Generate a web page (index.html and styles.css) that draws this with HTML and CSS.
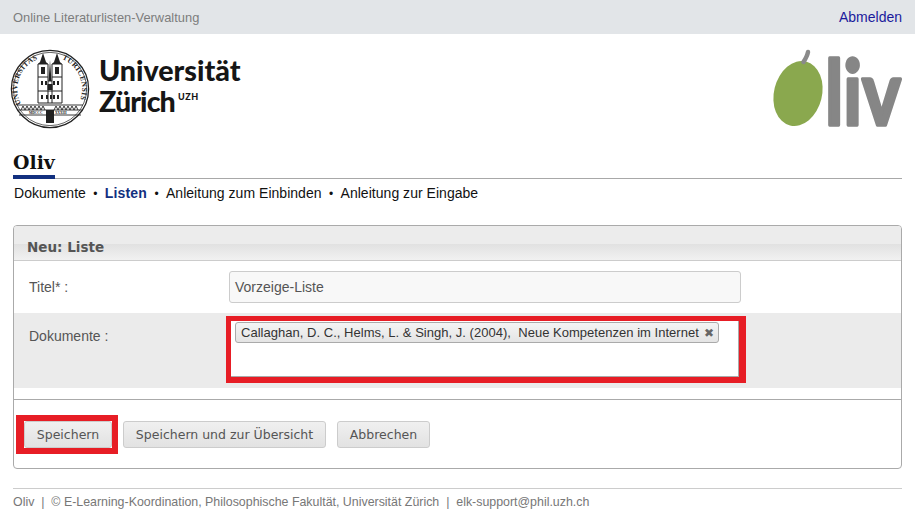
FILE: index.html
```html
<!DOCTYPE html>
<html lang="de">
<head>
<meta charset="utf-8">
<title>Oliv</title>
<link rel="stylesheet" href="styles.css">
</head>
<body>
<div class="topbar">
  <span class="topbar-title">Online Literaturlisten-Verwaltung</span>
  <a class="logout" href="#">Abmelden</a>
</div>
<header class="brand">
  <div class="uzh">
    <svg class="seal" width="80" height="80" viewBox="0 0 80 80">
      <defs>
        <path id="arcL" d="M11 55 A32 32 0 0 1 28 10"/>
        <path id="arcR" d="M52 10 A32 32 0 0 1 70 51"/>
      </defs>
      <circle cx="40" cy="40" r="38.600" fill="#fff" stroke="#222" stroke-width="1.300"/>
      <circle cx="40" cy="40" r="36.600" fill="none" stroke="#222" stroke-width=".7"/>
      <text class="seal-text"><textPath href="#arcL">UNIVERSITAS</textPath></text>
      <text class="seal-text"><textPath href="#arcR">TURICENSIS</textPath></text>
      <g fill="none" stroke="#222" stroke-width="1">
        <path d="M28 54V15h10v39M42 54V15h10v39M38 32h4M28 28h10M42 28h10M28 42h24M28 54h24"/>
      </g>
      <g fill="#222">
        <path d="M28 15l2-2 3-9 3 9 2 2zM42 15l2-2 3-9 3 9 2 2zM38.500 32l1.500-21 1.500 21z"/>
        <rect x="31" y="18" width="4" height="7"/>
        <rect x="45" y="18" width="4" height="7"/>
        <rect x="37.500" y="35" width="5" height="6"/>
        <rect x="31" y="32" width="2" height="4"/><rect x="35" y="32" width="2" height="4"/>
        <rect x="43" y="32" width="2" height="4"/><rect x="47" y="32" width="2" height="4"/>
        <rect x="31" y="46" width="2" height="4"/><rect x="36" y="46" width="2" height="4"/>
        <rect x="40" y="46" width="2" height="4"/><rect x="43" y="46" width="2" height="4"/><rect x="47" y="46" width="2" height="4"/>
        <rect x="36" y="61" width="8" height="13"/>
      </g>
      <path d="M7 56h66M8 61h64M9 66h62" stroke="#222" stroke-width=".9" fill="none"/>
      <path d="M11 61l2-4 2 4 2-4 2 4 2-4 2 4 2-4 2 4 2-4 2 4 2-4 2 4M44 61l2-4 2 4 2-4 2 4 2-4 2 4 2-4 2 4 2-4 2 4 2-4 2 4" stroke="#222" stroke-width=".9" fill="none"/>
      <text class="seal-date" x="19" y="65">MDCCC</text>
      <text class="seal-date" x="45" y="65">XXXIII</text>
    </svg>
    <div class="uzh-name">
      <div class="uzh-line">Universität</div>
      <div class="uzh-line uzh-line-tight">Zürich<sup class="uzh-sup">UZH</sup></div>
    </div>
  </div>
  <svg class="oliv-logo" width="132" height="84" viewBox="0 0 132 84">
    <ellipse cx="26" cy="45.500" rx="24" ry="33" transform="rotate(14 26 45.500)" fill="#8aa84e"/>
    <path d="M36 4 C35.500 7 34 10 31.500 14" fill="none" stroke="#8a8a8a" stroke-width="4.500" stroke-linecap="round"/>
    <text class="oliv-letters" transform="translate(53 77) scale(.82 1)">liv</text>
  </svg>
</header>
<main class="content">
  <div class="tabhead"><h1 class="tabtitle">Oliv</h1></div>
  <nav class="nav">
    <a href="#">Dokumente</a><span class="dot">•</span><a class="active" href="#">Listen</a><span class="dot">•</span><a href="#">Anleitung zum Einbinden</a><span class="dot">•</span><a href="#">Anleitung zur Eingabe</a>
  </nav>
  <section class="panel">
    <h2 class="panel-title">Neu: Liste</h2>
    <div class="row row-title">
      <label class="row-label">Titel* :</label>
      <div class="text-input">Vorzeige-Liste</div>
    </div>
    <div class="row row-docs">
      <label class="row-label">Dokumente :</label>
      <div class="mark-field">
        <div class="token-field">
          <span class="token">Callaghan, D. C., Helms, L. &amp; Singh, J. (2004),&nbsp; Neue Kompetenzen im Internet<span class="token-x">✖</span></span>
        </div>
      </div>
    </div>
    <div class="actions">
      <span class="mark-button"><button class="btn" type="button">Speichern</button></span>
      <button class="btn btn-wide" type="button">Speichern und zur Übersicht</button>
      <button class="btn btn-cancel" type="button">Abbrechen</button>
    </div>
  </section>
</main>
<footer class="footer">Oliv &nbsp;|&nbsp; © E-Learning-Koordination, Philosophische Fakultät, Universität Zürich &nbsp;|&nbsp; elk-support@phil.uzh.ch</footer>
</body>
</html>
```
FILE: styles.css
```css
* { box-sizing: border-box; }
html, body { margin: 0; padding: 0; }
body {
  width: 915px;
  height: 520px;
  overflow: hidden;
  background: #fff;
  color: #111;
  font-family: "Liberation Sans", Arial, sans-serif;
  font-size: 14px;
}
.topbar {
  height: 34px;
  background: #e2e5e8;
  padding: 0 13px;
  display: flex;
  justify-content: space-between;
  align-items: center;
  font-size: 14px;
}
.topbar-title { color: #7d7d7d; font-size: 12.900px; }
.logout { color: #1a1a9c; text-decoration: none; }
.brand {
  height: 116px;
  padding: 15px 11px 0 10px;
  display: flex;
  justify-content: space-between;
  align-items: flex-start;
}
.uzh { display: flex; align-items: flex-start; gap: 9px; }
.seal { display: block; }
.seal-text { font: 700 7.500px "Liberation Serif", serif; fill: #222; letter-spacing: .3px; }
.seal-date { font: 700 3.500px "Liberation Serif", serif; fill: #222; }
.uzh-name {
  padding-top: 6px;
  font-family: "Lato", sans-serif;
  font-weight: 900;
  font-size: 28.600px;
  line-height: 31px;
  color: #161616;
}
.uzh-line { white-space: nowrap; }
.uzh-line-tight { letter-spacing: -.9px; }
.uzh-sup {
  font-size: 9px;
  line-height: 0;
  vertical-align: 12px;
  margin-left: 3px;
  letter-spacing: .6px;
}
.oliv-logo { display: block; margin-top: -1px; overflow: visible; }
.oliv-letters {
  font: 700 90px "Lato", sans-serif;
  fill: #868686;
  stroke: #868686;
  stroke-width: 3.500px;
  stroke-linejoin: round;
}
.content { padding: 0 13px; }
.tabhead { height: 29px; border-bottom: 1px solid #a8a8a8; }
.tabtitle {
  display: inline-block;
  margin: 0;
  height: 29px;
  padding-top: 1px;
  border-bottom: 4px solid #12307f;
  font: 700 18.900px/22px "DejaVu Serif", serif;
  color: #111;
}
.nav {
  height: 46px;
  padding: 6px 0 0 1px;
  line-height: 17px;
}
.nav a { color: #111; text-decoration: none; letter-spacing: .03px; }
.nav a.active { color: #12307f; font-weight: 700; letter-spacing: .15px; }
.dot { margin: 0 7.400px; font-size: 12px; }
.panel {
  height: 244px;
  border: 1px solid #aaa;
  border-radius: 4px;
}
.panel-title {
  margin: 0;
  height: 35px;
  padding: 12px 13px 0;
  border-bottom: 1px solid #ccc;
  background: linear-gradient(#ececec 0, #ececec 18px, #e1e1e1 18px, #f1f1f1 100%);
  font: 700 13.500px/18px "DejaVu Sans", sans-serif;
  color: #555;
  border-radius: 3px 3px 0 0;
}
.row { display: flex; }
.row-label {
  width: 215px;
  padding-left: 15px;
  color: #555;
}
.row-title { height: 52px; padding-top: 10px; }
.row-title .row-label { line-height: 32px; }
.text-input {
  width: 512px;
  height: 32px;
  padding: 0 5px;
  border: 1px solid #ccc;
  border-radius: 3px;
  background: #f8f8f8;
  color: #555;
  line-height: 30px;
}
.row-docs {
  height: 75px;
  padding-top: 3px;
  background: #ebebeb;
}
.row-docs .row-label { padding-top: 12px; line-height: 17px; }
.mark-field {
  margin-left: -3px;
  width: 520px;
  height: 67px;
  border-style: solid;
  border-color: #e71d25;
  border-width: 5px 7px 6px 5px;
}
.token-field {
  height: 56px;
  padding: 1px 4px;
  background: #fff;
  border-right: 1px solid #aaa;
  border-bottom: 1px solid #aaa;
}
.token {
  display: inline-block;
  height: 21px;
  padding: 0 4px 0 5px;
  border: 1px solid #aaa;
  border-radius: 3px;
  background: linear-gradient(#f4f4f4, #e4e4e4);
  color: #333;
  font-size: 13px;
  letter-spacing: .025px;
  line-height: 19px;
  white-space: nowrap;
}
.token-x { margin-left: 5px; color: #666; font-size: 12px; }
.actions {
  margin-top: 11px;
  height: 69px;
  border-top: 1px solid #aaa;
  padding: 15px 0 0 2px;
  display: flex;
  align-items: flex-start;
}
.mark-button {
  display: block;
  border: 6px solid #e71d25;
  border-left-width: 8px;
  margin-right: 5px;
}
.btn {
  display: block;
  height: 27px;
  padding: 0;
  border: 1px solid #ccc;
  border-radius: 3px;
  background: linear-gradient(#f0f0f0, #e2e2e2);
  color: #555;
  font: 12.500px/25px "DejaVu Sans", sans-serif;
  width: 88px;
}
.btn-wide { width: 203px; margin-top: 6px; margin-right: 11px; }
.btn-cancel { width: 93px; margin-top: 6px; }
.footer {
  margin: 19px 13px 0;
  height: 26px;
  padding-top: 6px;
  border-top: 1px solid #ccc;
  color: #777;
  font-size: 12.400px;
  line-height: 14px;
}
```
